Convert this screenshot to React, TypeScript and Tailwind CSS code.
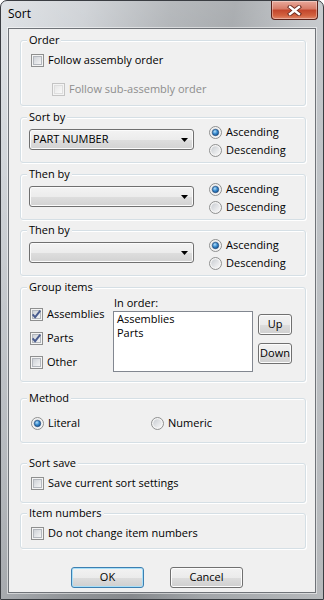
import type { ReactNode } from 'react';

type BoxProps = {
  label: string;
  className?: string;
  children?: ReactNode;
};

// Win7 style group box
function GroupBox({ label, className = '', children }: BoxProps) {
  return (
    <div
      className={`rounded-[3px] border border-[#d5dfe5] shadow-[inset_1px_1px_0_#ffffff,1px_1px_0_#ffffff] ${className}`}
    >
      <div className="-mt-[9px] ml-[6px] w-fit bg-[#f0f0f0] px-[2px] leading-[16px]">{label}</div>
      {children}
    </div>
  );
}

function CheckBox({ checked = false, disabled = false }: { checked?: boolean; disabled?: boolean }) {
  return (
    <svg width="13" height="13" viewBox="0 0 13 13" className="shrink-0">
      <defs>
        <linearGradient id="cbFill" x1="0" y1="0" x2="1" y2="1">
          <stop offset="0" stopColor="#cbcfd5" />
          <stop offset="1" stopColor="#f7f7f7" />
        </linearGradient>
        <linearGradient id="cbFillOff" x1="0" y1="0" x2="1" y2="1">
          <stop offset="0" stopColor="#e6e6e6" />
          <stop offset="1" stopColor="#fbfbfb" />
        </linearGradient>
      </defs>
      <rect x="0.5" y="0.5" width="12" height="12" fill="#f4f4f4" stroke={disabled ? '#c4c4c4' : '#8e8f8f'} />
      <rect
        x="2.5"
        y="2.5"
        width="8"
        height="8"
        fill={disabled ? 'url(#cbFillOff)' : 'url(#cbFill)'}
        stroke={disabled ? '#dedede' : '#b3b7bd'}
      />
      {checked && (
        <path d="M2.6 6.4 L5.1 9.2 L10.3 2.6" fill="none" stroke="#4a5c8e" strokeWidth="1.9" />
      )}
    </svg>
  );
}

function Radio({ checked = false }: { checked?: boolean }) {
  return (
    <svg width="13" height="13" viewBox="0 0 13 13" className="shrink-0">
      <defs>
        <linearGradient id="rdFill" x1="0" y1="0" x2="1" y2="1">
          <stop offset="0" stopColor="#c9cdd2" />
          <stop offset="1" stopColor="#f8f8f8" />
        </linearGradient>
        <radialGradient id="rdDot" cx="0.4" cy="0.35" r="0.7">
          <stop offset="0" stopColor="#b6e0fb" />
          <stop offset="0.5" stopColor="#3a8ccf" />
          <stop offset="1" stopColor="#13508f" />
        </radialGradient>
      </defs>
      <circle cx="6.5" cy="6.5" r="6" fill="#f4f4f4" stroke="#8e8f8f" />
      <circle cx="6.5" cy="6.5" r="4.3" fill="url(#rdFill)" />
      {checked && <circle cx="6.5" cy="6.5" r="3.2" fill="url(#rdDot)" stroke="#1d3f6e" strokeWidth="0.6" />}
    </svg>
  );
}

function CheckRow({ label, checked, disabled, className = '' }: { label: string; checked?: boolean; disabled?: boolean; className?: string }) {
  return (
    <div className={`flex h-[16px] items-center gap-[4px] ${className}`}>
      <CheckBox checked={checked} disabled={disabled} />
      <span className={disabled ? 'text-[#8d8d8d]' : ''}>{label}</span>
    </div>
  );
}

function RadioRow({ label, checked, className = '' }: { label: string; checked?: boolean; className?: string }) {
  return (
    <div className={`flex h-[14px] items-center gap-[4px] ${className}`}>
      <Radio checked={checked} />
      <span>{label}</span>
    </div>
  );
}

function Combo({ value = '' }: { value?: string }) {
  return (
    <div className="mt-[4px] ml-[8px] flex h-[21px] w-[165px] items-center justify-between rounded-[3px] border border-[#707070] bg-[linear-gradient(180deg,#f3f3f3_0%,#ececec_50%,#dedede_51%,#d2d2d2_100%)] pl-[3px] pr-[5px] shadow-[inset_0_0_0_1px_#fbfbfb]">
      <span>{value}</span>
      <svg width="7" height="4" viewBox="0 0 7 4">
        <path d="M0 0 H7 L3.5 4 Z" fill="#000" />
      </svg>
    </div>
  );
}

function SortBox({ label, value, className = '' }: { label: string; value?: string; className?: string }) {
  return (
    <GroupBox label={label} className={`h-[46px] ${className}`}>
      <div className="flex items-start">
        <Combo value={value} />
        <div className="ml-[15px] flex flex-col gap-[4px]">
          <RadioRow label="Ascending" checked />
          <RadioRow label="Descending" />
        </div>
      </div>
    </GroupBox>
  );
}

function Button({ label, primary = false, className = '' }: { label: string; primary?: boolean; className?: string }) {
  return (
    <div
      className={`flex items-center justify-center rounded-[3px] border bg-[linear-gradient(180deg,#f2f2f2_0%,#ebebeb_50%,#dddddd_51%,#cfcfcf_100%)] ${
        primary
          ? 'border-[#3c7fb1] shadow-[inset_0_0_0_1px_#a8dff8]'
          : 'border-[#707070] shadow-[inset_0_0_0_1px_#fcfcfc]'
      } ${className}`}
    >
      {label}
    </div>
  );
}

export default function App() {
  return (
    <div className="h-[600px] w-[324px] bg-white font-['Open_Sans',sans-serif] text-[11px] text-black">
      <div className="flex h-full flex-col rounded-t-[7px] border border-[#3a3d42] bg-[linear-gradient(180deg,rgba(255,255,255,0.2)_0%,rgba(255,255,255,0)_25%,rgba(0,0,0,0.12)_100%),linear-gradient(100deg,#d9dde1_0%,#c6cacf_20%,#a5a9ad_40%,#989ca0_55%,#b8bcc0_72%,#cfd2d5_100%)] px-[7px] pb-[6px]">
        {/* title bar */}
        <div className="flex h-[27px] items-start justify-between">
          <span className="mt-[5px] text-[12px] leading-[16px]">Sort</span>
          <div className="-mr-[2px] flex h-[19px] w-[47px] items-center justify-center rounded-b-[4px] border border-t-0 border-[#5b2119] bg-[linear-gradient(180deg,#e9a99b_0%,#d67a66_45%,#c2452c_50%,#d2613f_80%,#e0866c_100%)] shadow-[inset_0_0_0_1px_rgba(255,255,255,0.35)]">
            <svg width="15" height="11" viewBox="0 0 15 11">
              <path d="M3 2 L12 9 M12 2 L3 9" stroke="#6a2a20" strokeWidth="4.2" strokeLinecap="square" />
              <path d="M3 2 L12 9 M12 2 L3 9" stroke="#ffffff" strokeWidth="2.4" strokeLinecap="square" />
            </svg>
          </div>
        </div>

        {/* client area */}
        <div className="flex flex-1 flex-col border border-[#6f7378] bg-[#f0f0f0] pl-[11px] pr-[9px] shadow-[0_0_0_1px_rgba(255,255,255,0.5)]">
          <GroupBox label="Order" className="mt-[11px] h-[66px]">
            <CheckRow label="Follow assembly order" className="mt-[4px] pl-[10px]" />
            <CheckRow label="Follow sub-assembly order" disabled className="mt-[13px] pl-[31px]" />
          </GroupBox>

          <SortBox label="Sort by" value="PART NUMBER" className="mt-[11px]" />
          <SortBox label="Then by" className="mt-[11px]" />
          <SortBox label="Then by" className="mt-[10px]" />

          <GroupBox label="Group items" className="mt-[11px] h-[95px]">
            <div className="flex items-start">
              <div className="mt-[11px] flex w-[92px] flex-col gap-[8px] pl-[9px]">
                <CheckRow label="Assemblies" checked />
                <CheckRow label="Parts" checked />
                <CheckRow label="Other" />
              </div>
              <div className="flex flex-col">
                <div className="pl-[1px] leading-[16px]">In order:</div>
                <div className="h-[61px] w-[140px] border border-[#828790] bg-white px-[3px] leading-[14px]">
                  <div>Assemblies</div>
                  <div>Parts</div>
                </div>
              </div>
              <div className="ml-[5px] mt-[19px] flex flex-col gap-[8px]">
                <Button label="Up" className="h-[21px] w-[34px]" />
                <Button label="Down" className="h-[21px] w-[34px]" />
              </div>
            </div>
          </GroupBox>

          <GroupBox label="Method" className="mt-[16px] h-[45px]">
            <div className="mt-[10px] flex pl-[10px]">
              <RadioRow label="Literal" checked className="w-[120px]" />
              <RadioRow label="Numeric" />
            </div>
          </GroupBox>

          <GroupBox label="Sort save" className="mt-[20px] h-[40px]">
            <CheckRow label="Save current sort settings" className="mt-[4px] pl-[10px]" />
          </GroupBox>

          <GroupBox label="Item numbers" className="mt-[10px] h-[36px]">
            <CheckRow label="Do not change item numbers" className="mt-[4px] pl-[10px]" />
          </GroupBox>

          <div className="mt-[18px] flex">
            <Button label="OK" primary className="ml-[51px] h-[21px] w-[73px]" />
            <Button label="Cancel" className="ml-[26px] h-[21px] w-[73px]" />
          </div>
        </div>
      </div>
    </div>
  );
}
